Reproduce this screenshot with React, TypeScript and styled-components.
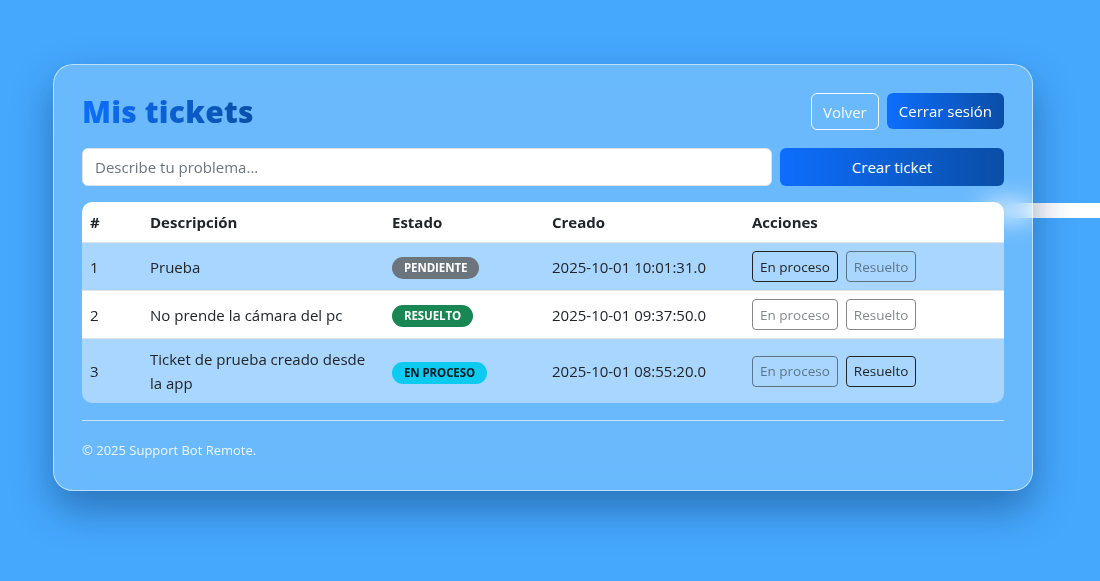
import React from "react";
import styled, { createGlobalStyle } from "styled-components";

const Global = createGlobalStyle`
  html, body { margin: 0; padding: 0; }
  body {
    background: #45a8fd;
    font-family: "Open Sans", "Noto Sans", sans-serif;
    color: #212529;
    width: 1100px;
    height: 581px;
    overflow: hidden;
  }
`;

const Page = styled.div`
  position: relative;
  padding: 64px 0 0 53px;
  height: 581px;
  box-sizing: border-box;
`;

const GlowBar = styled.div`
  position: absolute;
  left: 985px;
  right: 0;
  top: 203px;
  height: 15px;
  background: #ffffff;
`;

const Card = styled.div`
  position: relative;
  width: 980px;
  box-sizing: border-box;
  padding: 28px 28px 31px 28px;
  border-radius: 20px;
  border: 1px solid rgba(255, 255, 255, 0.55);
  background: rgba(255, 255, 255, 0.2);
  backdrop-filter: blur(12px);
  box-shadow: 0 18px 40px rgba(0, 35, 85, 0.4);
`;

const Header = styled.div`
  display: flex;
  align-items: center;
  justify-content: space-between;
  height: 37px;
`;

const Title = styled.h1`
  margin: 0;
  font-size: 30px;
  font-weight: 800;
  letter-spacing: 0.2px;
  background: linear-gradient(90deg, #0d6efd, #0a4fa5);
  -webkit-background-clip: text;
  background-clip: text;
  color: transparent;
  line-height: 1.2;
`;

const HeaderActions = styled.div`
  display: flex;
  gap: 8px;
`;

const GhostButton = styled.button`
  font-family: inherit;
  font-size: 15px;
  height: 37px;
  padding: 0 11px;
  border-radius: 6px;
  border: 1px solid rgba(255, 255, 255, 0.9);
  background: transparent;
  color: #f4f9ff;
`;

const PrimaryButton = styled.button<{ $wide?: boolean }>`
  font-family: inherit;
  font-size: 15px;
  height: ${(p) => (p.$wide ? "38px" : "36px")};
  padding: 0 12px;
  border-radius: 6px;
  border: none;
  background: linear-gradient(90deg, #0d6efd, #0a4ea6);
  color: #ffffff;
  ${(p) => (p.$wide ? "width: 224px;" : "")}
`;

const CreateRow = styled.div`
  display: flex;
  gap: 8px;
  margin-top: 18px;
`;

const Input = styled.input`
  flex: 1;
  height: 38px;
  box-sizing: border-box;
  border: 1px solid #dee2e6;
  border-radius: 6px;
  padding: 0 12px;
  font-family: inherit;
  font-size: 15px;
  color: #212529;
  background: #fff;
  &::placeholder { color: #6c757d; }
`;

const TableWrap = styled.div`
  margin-top: 16px;
  border-radius: 10px;
  overflow: hidden;
`;

const Table = styled.table`
  width: 100%;
  border-collapse: collapse;
  font-size: 15px;
  line-height: 24px;
`;

const Th = styled.th<{ $w?: number }>`
  text-align: left;
  font-weight: 700;
  padding: 8px;
  height: 40px;
  box-sizing: border-box;
  background: #fff;
  border-bottom: 1px solid #dee2e6;
  ${(p) => (p.$w ? `width: ${p.$w}px;` : "")}
`;

const Tr = styled.tr<{ $striped: boolean }>`
  background: ${(p) => (p.$striped ? "#a8d6fe" : "#ffffff")};
  border-bottom: 1px solid #dee2e6;
  &:last-child { border-bottom: none; }
`;

const Td = styled.td`
  padding: 8px;
  vertical-align: middle;
`;

const Badge = styled.span<{ $bg: string; $fg: string }>`
  display: inline-block;
  padding: 0 12px;
  height: 22px;
  line-height: 22px;
  border-radius: 11px;
  background: ${(p) => p.$bg};
  color: ${(p) => p.$fg};
  font-size: 11.5px;
  font-weight: 700;
  letter-spacing: -0.1px;
`;

const Actions = styled.div`
  display: flex;
  gap: 8px;
`;

const ActionButton = styled.button<{ $active: boolean }>`
  font-family: inherit;
  font-size: 13.5px;
  height: 31px;
  padding: 0 7px;
  border-radius: 4px;
  background: transparent;
  border: 1px solid #212529;
  color: #212529;
  opacity: ${(p) => (p.$active ? 1 : 0.55)};
`;

const Divider = styled.hr`
  margin: 17px 0 0;
  border: none;
  border-top: 1px solid rgba(255, 255, 255, 0.6);
`;

const Footer = styled.p`
  margin: 20px 0 0;
  font-size: 13px;
  font-weight: 500;
  color: rgba(255, 255, 255, 0.88);
`;

type Ticket = {
  id: number;
  desc: string;
  status: "PENDIENTE" | "RESUELTO" | "EN PROCESO";
  created: string;
  enProceso: boolean;
  resuelto: boolean;
};

const tickets: Ticket[] = [
  { id: 1, desc: "Prueba", status: "PENDIENTE", created: "2025-10-01 10:01:31.0", enProceso: true, resuelto: false },
  { id: 2, desc: "No prende la cámara del pc", status: "RESUELTO", created: "2025-10-01 09:37:50.0", enProceso: false, resuelto: false },
  { id: 3, desc: "Ticket de prueba creado desde la app", status: "EN PROCESO", created: "2025-10-01 08:55:20.0", enProceso: false, resuelto: true },
];

const badgeColors: Record<Ticket["status"], { bg: string; fg: string }> = {
  PENDIENTE: { bg: "#6c757d", fg: "#ffffff" },
  RESUELTO: { bg: "#198754", fg: "#ffffff" },
  "EN PROCESO": { bg: "#0dcaf0", fg: "#0b1a20" },
};

export default function App() {
  return (
    <>
      <Global />
      <Page>
        <GlowBar />
        <Card>
          <Header>
            <Title>Mis tickets</Title>
            <HeaderActions>
              <GhostButton>Volver</GhostButton>
              <PrimaryButton>Cerrar sesión</PrimaryButton>
            </HeaderActions>
          </Header>
          <CreateRow>
            <Input placeholder="Describe tu problema..." />
            <PrimaryButton $wide>Crear ticket</PrimaryButton>
          </CreateRow>
          <TableWrap>
            <Table>
              <thead>
                <tr>
                  <Th $w={60}>#</Th>
                  <Th $w={242}>Descripción</Th>
                  <Th $w={160}>Estado</Th>
                  <Th $w={200}>Creado</Th>
                  <Th>Acciones</Th>
                </tr>
              </thead>
              <tbody>
                {tickets.map((t, i) => (
                  <Tr key={t.id} $striped={i % 2 === 0}>
                    <Td>{t.id}</Td>
                    <Td>{t.desc}</Td>
                    <Td>
                      <Badge $bg={badgeColors[t.status].bg} $fg={badgeColors[t.status].fg}>
                        {t.status}
                      </Badge>
                    </Td>
                    <Td>{t.created}</Td>
                    <Td>
                      <Actions>
                        <ActionButton $active={t.enProceso}>En proceso</ActionButton>
                        <ActionButton $active={t.resuelto}>Resuelto</ActionButton>
                      </Actions>
                    </Td>
                  </Tr>
                ))}
              </tbody>
            </Table>
          </TableWrap>
          <Divider />
          <Footer>© 2025 Support Bot Remote.</Footer>
        </Card>
      </Page>
    </>
  );
}
